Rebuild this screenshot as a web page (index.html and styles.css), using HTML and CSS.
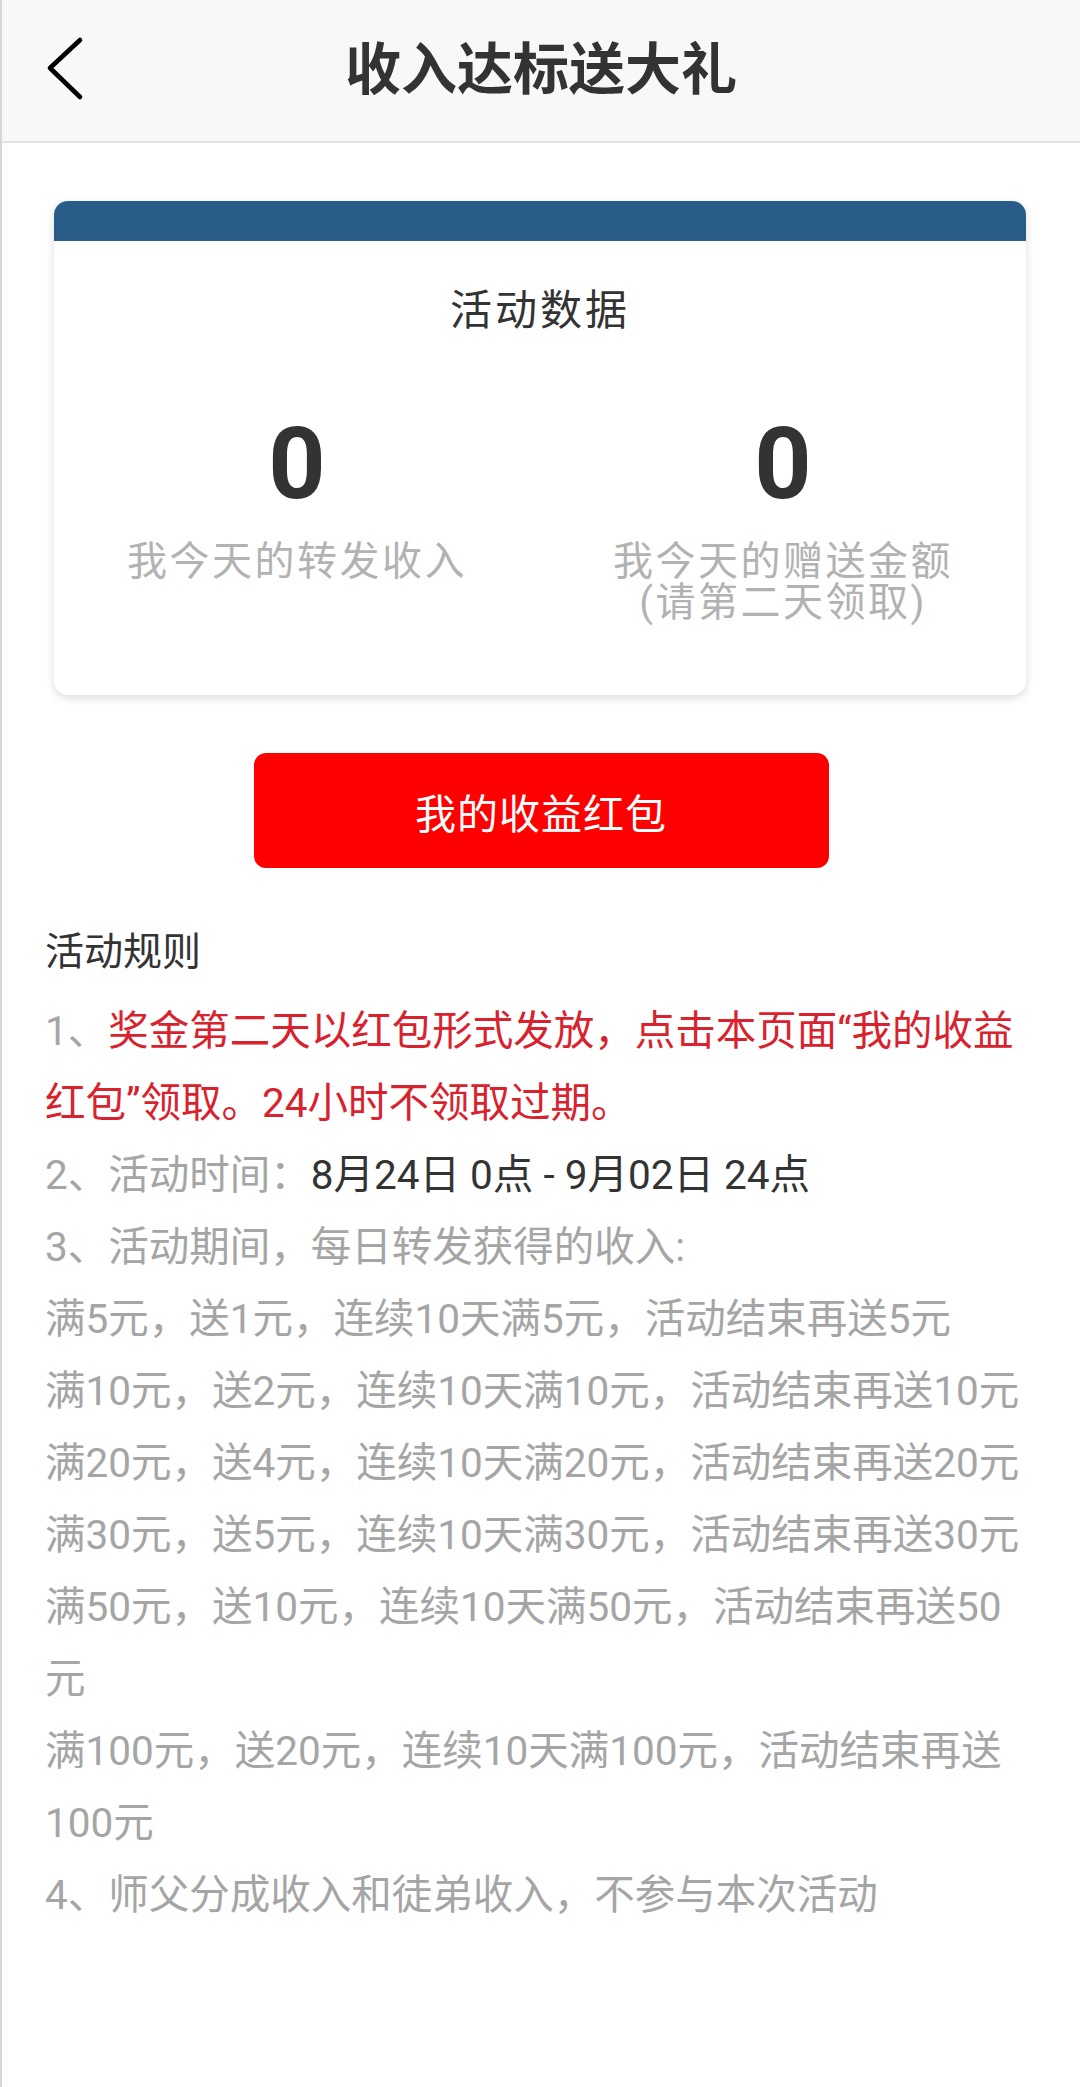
FILE: index.html
```html
<!DOCTYPE html>
<html lang="zh-CN">
<head>
<meta charset="utf-8">
<title>收入达标送大礼</title>
<link rel="stylesheet" href="styles.css">
</head>
<body>
<div class="page">
  <header class="topbar">
    <svg class="back" width="44" height="72" viewBox="0 0 44 72" aria-hidden="true">
      <path d="M36 8 L6 36 L36 65" fill="none" stroke="#000" stroke-width="4.6" stroke-linecap="round" stroke-linejoin="round"/>
    </svg>
    <h1 class="title">收入达标送大礼</h1>
    <span></span>
  </header>

  <section class="card">
    <div class="card-bar"></div>
    <div class="card-body">
      <h2 class="card-title">活动数据</h2>
      <div class="stats">
        <div class="stat">
          <div class="stat-num">0</div>
          <div class="stat-label">我今天的转发收入</div>
        </div>
        <div class="stat">
          <div class="stat-num">0</div>
          <div class="stat-label">我今天的赠送金额<br>(请第二天领取)</div>
        </div>
      </div>
    </div>
  </section>

  <div class="btn-wrap">
    <button class="btn">我的收益红包</button>
  </div>

  <section class="rules">
    <h3 class="rules-title">活动规则</h3>
    <p class="rule">1、<span class="red">奖金第二天以红包形式发放，点击本页面“我的收益红包”领取。24小时不领取过期。</span></p>
    <p class="rule">2、活动时间：<span class="dark">8月24日 0点 - 9月02日 24点</span></p>
    <p class="rule">3、活动期间，每日转发获得的收入:</p>
    <p class="rule">满5元，送1元，连续10天满5元，活动结束再送5元</p>
    <p class="rule">满10元，送2元，连续10天满10元，活动结束再送10元</p>
    <p class="rule">满20元，送4元，连续10天满20元，活动结束再送20元</p>
    <p class="rule">满30元，送5元，连续10天满30元，活动结束再送30元</p>
    <p class="rule">满50元，送10元，连续10天满50元，活动结束再送50元</p>
    <p class="rule">满100元，送20元，连续10天满100元，活动结束再送100元</p>
    <p class="rule">4、师父分成收入和徒弟收入，不参与本次活动</p>
  </section>
</div>
</body>
</html>
```

FILE: styles.css
```css
html, body {
  margin: 0;
  padding: 0;
  background: #ffffff;
}
body {
  font-family: Roboto, "Noto Sans CJK SC", "Noto Sans", sans-serif;
  color: #333333;
}
.page {
  min-height: 2087px;
  border-left: 2px solid #d6d6d6;
  box-sizing: border-box;
}
.topbar {
  height: 141px;
  background: #f8f8f8;
  border-bottom: 2px solid #e4e4e4;
  display: grid;
  grid-template-columns: 1fr auto 1fr;
  align-items: start;
}
.back {
  display: block;
  margin-top: 32px;
  margin-left: 42px;
}
.title {
  margin: 37px 0 0;
  font-family: "Noto Sans CJK SC", sans-serif;
  font-weight: 700;
  font-size: 56px;
  line-height: 56px;
  color: #333333;
}
.card {
  margin: 58px 54px 0 52px;
  background: #ffffff;
  border-radius: 14px;
  overflow: hidden;
  box-shadow: 0 3px 10px rgba(0, 0, 0, 0.14);
}
.card-bar {
  height: 40px;
  background: #295c86;
}
.card-body {
  padding: 49px 0 72px;
}
.card-title {
  margin: 0;
  text-align: center;
  font-weight: 400;
  font-size: 42px;
  line-height: 42px;
  letter-spacing: 3px;
  color: #333333;
}
.stats {
  display: grid;
  grid-template-columns: 1fr 1fr;
  margin-top: 82px;
}
.stat {
  text-align: center;
}
.stat-num {
  font-family: Roboto, sans-serif;
  font-weight: 700;
  font-size: 100px;
  line-height: 100px;
  color: #333333;
}
.stat-label {
  margin-top: 27px;
  font-size: 40px;
  line-height: 41px;
  letter-spacing: 2.5px;
  color: #b2b2b2;
}
.btn-wrap {
  display: flex;
  justify-content: center;
  margin-top: 58px;
}
.btn {
  width: 575px;
  height: 115px;
  border: none;
  border-radius: 12px;
  background: #ff0000;
  color: #ffffff;
  font-family: "Noto Sans CJK SC", sans-serif;
  font-size: 41px;
  letter-spacing: 1px;
  padding: 0;
}
.rules {
  padding: 54px 45px 0 43px;
}
.rules-title {
  margin: 0 0 13px;
  font-weight: 400;
  font-size: 39px;
  line-height: 60px;
  color: #333333;
}
.rule {
  margin: 0;
  font-size: 40.5px;
  line-height: 72px;
  color: #a5a5a5;
}
.red {
  color: #d8222e;
}
.dark {
  color: #333333;
}
```
